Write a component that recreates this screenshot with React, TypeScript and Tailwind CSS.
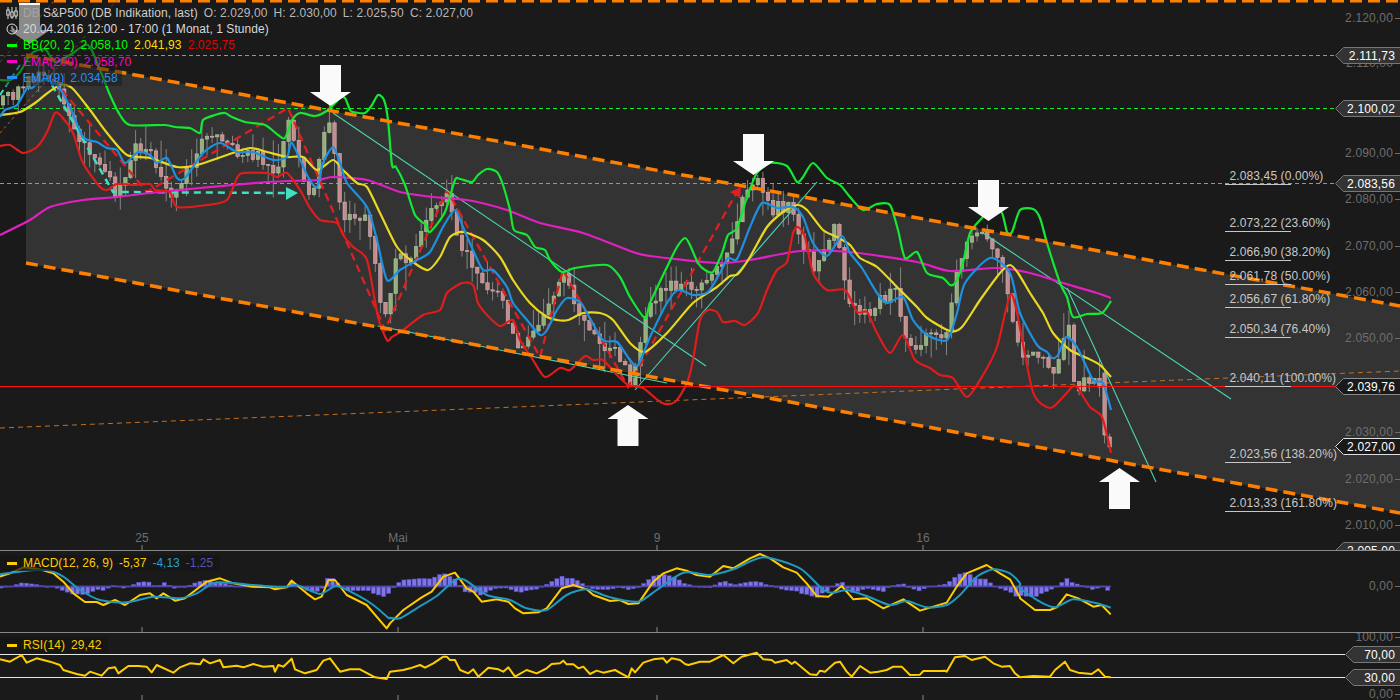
import React from "react";

type P = [number, number];
const Z = (x0: number, y0: number, a: number[][]): P[] => a.map(([x, y]) => [x0 + x / 3, y0 + y / 3]);

const green: P[] = [[0,80],[10,80],[20,72],[30,55],[38,50],[46,50],[55,62],[70,55],[88,45],[100,70],[110,95],[120,115],[130,125],[165,125],[175,127],[190,128],[200,133],[203,120],[215,115],[225,113],[232,117],[245,122],[265,125],[278,135],[285,138],[292,120],[300,113],[315,116],[328,110],[340,98],[345,98],[350,110],[353,112],[365,113],[372,105],[378,95],[384,100],[388,120],[392,165],[396,167],[405,185],[415,215],[426,225],[430,232],[445,212],[455,180],[460,179],[472,182],[478,175],[487,169],[497,172],[503,185],[510,210],[514,230],[527,235],[535,247],[545,250],[550,260],[562,272],[575,268],[607,265],[620,277],[630,297],[645,318],[650,303],[667,267],[677,247],[685,238],[690,245],[698,263],[705,270],[713,272],[722,253],[728,235],[737,228],[747,197],[757,173],[770,163],[787,166],[797,182],[803,177],[813,163],[827,178],[840,185],[850,197],[863,210],[877,204],[890,205],[898,230],[905,258],[917,252],[927,273],[943,278],[950,285],[955,283],[962,267],[970,233],[982,218],[993,207],[1002,213],[1007,232],[1012,232],[1020,210],[1033,209],[1040,218],[1047,243],[1060,283],[1067,297],[1073,317],[1087,314],[1102,313],[1111,301]];
const yellow: P[] = [[0,115],[20,112],[35,103],[45,95],[60,85],[72,88],[90,110],[107,133],[127,155],[150,158],[177,167],[197,165],[227,155],[250,148],[267,152],[287,157],[303,157],[317,170],[333,160],[343,170],[357,183],[367,187],[380,213],[397,247],[413,262],[428,270],[440,257],[450,237],[463,232],[483,240],[500,257],[513,280],[530,303],[547,317],[557,320],[568,320],[583,313],[600,313],[613,320],[630,343],[645,352],[667,333],[693,303],[717,287],[730,276],[738,274],[750,257],[767,227],[783,212],[797,205],[807,210],[823,230],[837,237],[850,245],[860,258],[877,267],[897,287],[917,307],[927,318],[950,331],[962,327],[980,300],[1000,273],[1010,265],[1018,273],[1030,293],[1043,313],[1053,333],[1070,350],[1087,358],[1100,365],[1111,377]];
const blue: P[] = [[0,117],[5,110],[17,105],[27,88],[32,88],[43,80],[57,85],[70,107],[83,137],[97,142],[107,148],[117,150],[125,163],[138,152],[150,155],[157,163],[167,158],[177,178],[185,178],[203,153],[220,143],[237,152],[253,152],[273,160],[287,157],[292,143],[308,177],[317,187],[323,163],[333,147],[340,163],[347,183],[367,207],[377,240],[387,280],[400,270],[417,260],[430,252],[443,227],[455,210],[463,227],[473,250],[483,270],[493,270],[507,287],[513,303],[527,320],[540,335],[547,330],[557,310],[567,298],[580,302],[587,313],[603,340],[617,342],[630,360],[638,365],[650,337],[667,303],[678,290],[693,295],[708,292],[720,273],[728,258],[737,259],[750,227],[762,203],[777,208],[793,207],[803,217],[813,243],[827,256],[842,236],[850,253],[862,268],[877,293],[887,303],[903,297],[913,320],[927,335],[947,340],[957,313],[965,283],[990,258],[1010,273],[1020,313],[1037,345],[1047,352],[1052,358],[1058,355],[1066,337],[1077,347],[1093,380],[1103,383],[1111,410]];
const red: P[] = [[0,146],[10,145],[23,153],[37,147],[47,132],[55,113],[62,117],[73,133],[83,163],[100,187],[107,190],[117,184],[133,185],[150,184],[155,190],[170,192],[177,207],[207,205],[227,200],[237,178],[243,173],[267,173],[277,177],[287,173],[300,190],[310,208],[320,220],[337,223],[343,235],[353,247],[367,260],[378,317],[387,340],[392,337],[403,330],[423,315],[440,310],[447,293],[462,283],[473,285],[478,303],[487,315],[500,326],[513,320],[520,340],[533,360],[545,377],[560,368],[570,370],[585,356],[593,360],[603,360],[617,375],[628,385],[643,388],[662,403],[675,402],[687,383],[693,360],[700,320],[708,310],[717,312],[723,322],[735,321],[745,325],[758,313],[767,290],[777,270],[787,262],[793,233],[798,227],[805,237],[813,273],[827,290],[845,290],[857,312],[867,312],[877,333],[890,353],[903,335],[915,360],[930,368],[940,375],[953,378],[967,397],[983,375],[997,347],[1010,295],[1017,313],[1033,392],[1050,408],[1063,397],[1072,387],[1077,387],[1090,407],[1102,417],[1111,453]];
const magenta: P[] = [[0,235],[30,220],[50,207],[83,200],[117,197],[150,193],[200,188],[267,182],[317,180],[333,177],[367,180],[400,192],[433,197],[467,200],[507,210],[540,223],[583,233],[633,252],[650,256],[717,263],[750,260],[800,251],[850,252],[917,262],[950,271],[997,268],[1030,273],[1063,283],[1097,293],[1111,298]];
const price: P[] = [[0,105],[20,90],[40,70],[60,85],[70,120],[85,150],[100,165],[115,190],[125,185],[135,145],[150,150],[160,175],[175,200],[190,165],[205,130],[220,140],[235,150],[255,155],[275,175],[290,115],[300,170],[310,205],[322,145],[330,118],[338,190],[345,215],[365,215],[385,320],[395,265],[415,250],[430,215],[445,195],[460,240],[480,280],[500,290],[515,345],[535,335],[548,300],[563,275],[580,310],[600,350],[620,355],[630,385],[645,320],[660,285],[680,285],[700,290],[725,265],[745,195],[758,185],[770,210],[790,205],[805,250],[815,270],[835,225],[850,310],[870,310],[895,290],[910,350],[925,335],[945,345],[955,280],[968,235],[985,240],[1000,265],[1015,330],[1020,355],[1040,355],[1053,380],[1068,320],[1075,385],[1095,380],[1105,385],[1110,446]];

const macd: P[] = [
  ...Z(0,530,[[0,140],[30,130],[70,112],[120,118],[160,130],[190,155],[220,190],[255,216],[290,216],[310,225],[345,210],[375,225],[420,195],[450,190],[470,205],[490,190],[525,212],[555,205],[600,170],[620,155],[660,145],[700,160],[760,170],[810,172],[825,178],[860,172],[875,152],[920,190],[945,208],[965,200],[985,150],[1005,150],[1040,195],[1100,225],[1160,295]]),
  ...Z(390,540,[[0,250],[40,210],[95,172],[125,155],[160,110],[195,98],[230,145],[250,155],[275,185],[320,178],[355,185],[375,205],[400,220],[445,217],[470,205],[515,145],[550,135],[590,148],[610,165],[660,183],[690,180],[715,192],[745,190],[790,125],[820,100],[860,85],[890,92],[920,105]]),
  ...Z(700,540,[[30,110],[70,78],[100,85],[150,55],[180,42],[210,55],[250,82],[290,98],[320,130],[350,168],[385,170],[425,138],[460,178],[500,175],[550,205],[610,178],[660,212],[740,188],[770,140],[800,100],[860,75],[900,100],[930,118],[960,172]]),
  ...Z(1000,530,[[60,205],[105,240],[150,240],[170,232],[200,193],[235,205],[280,230],[305,225],[332,253]]),
];
const signal: P[] = [
  ...Z(0,530,[[0,133],[80,122],[140,120],[190,140],[240,180],[300,210],[380,217],[460,200],[540,205],[590,190],[650,157],[760,165],[850,172],[890,165],[960,192],[1010,168],[1080,200],[1120,225],[1165,263]]),
  ...Z(390,540,[[0,233],[30,235],[80,205],[140,168],[195,120],[225,120],[290,165],[360,180],[410,205],[470,210],[530,165],[590,148],[660,172],[745,185],[800,150],[880,98]]),
  ...Z(700,540,[[30,105],[100,88],[190,52],[300,85],[370,150],[400,158],[440,150],[500,168],[570,195],[620,183],[680,202],[740,195],[780,165],[830,110],[880,88],[930,100],[960,130]]),
  ...Z(1000,530,[[60,175],[120,215],[165,232],[220,208],[290,220],[332,233]]),
];
const rsi: P[] = [
  ...Z(0,530,[[0,388],[30,395],[65,375],[80,398],[110,385],[150,395],[180,405],[190,420],[230,432],[255,437],[270,425],[305,437],[325,415],[345,412],[355,430],[385,408],[415,408],[440,410],[455,427],[470,405],[520,428],[540,412],[570,400],[600,403],[610,388],[630,400],[660,390],[670,412],[710,407],[730,412],[760,402],[790,410],[820,408],[825,425],[835,405],[850,410],[875,386],[885,418],[915,430],[950,420],[970,392],[990,385],[1020,425],[1050,418],[1080,418],[1125,442],[1160,447]]),
  ...Z(390,540,[[0,395],[40,390],[60,385],[90,375],[105,383],[130,370],[160,350],[170,350],[180,360],[195,360],[210,390],[235,400],[250,388],[265,410],[295,383],[325,388],[340,395],[355,382],[375,410],[410,390],[440,400],[470,385],[485,372],[510,370],[520,362],[530,373],[550,373],[565,385],[580,380],[600,402],[620,392],[640,398],[675,390],[715,412],[725,385],[735,397],[760,368],[790,358],[820,355],[830,368],[845,355],[870,360],[885,372],[895,375],[930,365]]),
  ...Z(700,540,[[30,365],[70,345],[100,370],[125,350],[170,338],[190,358],[215,360],[225,368],[260,360],[275,372],[285,365],[330,403],[350,405],[360,392],[375,395],[405,368],[420,365],[440,395],[455,410],[480,378],[510,398],[535,395],[560,390],[580,380],[605,380],[630,405],[660,404],[670,393],[720,393],[735,392],[740,395],[765,352],[795,348],[815,360],[855,350],[880,370],[905,380],[930,378],[945,400],[960,412]]),
  ...Z(1000,530,[[60,442],[100,438],[150,440],[165,420],[195,395],[210,420],[235,428],[275,432],[295,418],[315,440],[332,442]]),
];

const pts = (a: P[]) => a.map((p) => p.join(",")).join(" ");
const smooth = (a: P[]) => {
  let d = `M${a[0][0]},${a[0][1]}`;
  for (let i = 0; i < a.length - 1; i++) {
    const p0 = a[Math.max(i - 1, 0)], p1 = a[i], p2 = a[i + 1], p3 = a[Math.min(i + 2, a.length - 1)];
    const c1 = [p1[0] + (p2[0] - p0[0]) / 8, p1[1] + (p2[1] - p0[1]) / 8];
    const c2 = [p2[0] - (p3[0] - p1[0]) / 8, p2[1] - (p3[1] - p1[1]) / 8];
    d += ` C${c1[0].toFixed(1)},${c1[1].toFixed(1)} ${c2[0].toFixed(1)},${c2[1].toFixed(1)} ${p2[0].toFixed(1)},${p2[1].toFixed(1)}`;
  }
  return d;
};
const at = (a: P[], x: number) => {
  if (x <= a[0][0]) return a[0][1];
  for (let i = 0; i < a.length - 1; i++) {
    if (x <= a[i + 1][0]) return a[i][1] + ((a[i + 1][1] - a[i][1]) * (x - a[i][0])) / (a[i + 1][0] - a[i][0] || 1);
  }
  return a[a.length - 1][1];
};

let seed = 23;
const rnd = () => {
  seed = (seed * 16807) % 2147483647;
  return seed / 2147483647;
};
const candles: { x: number; o: number; c: number; h: number; l: number }[] = [];
{
  let prev = at(price, 0);
  for (let x = 3; x < 1112; x += 5.1) {
    let c = at(price, x) + (rnd() - 0.5) * 14;
    let o = prev;
    if (x > 1107) { o = 437; c = 447; }
    else if (x > 1102) { o = 373; c = 435; }
    candles.push({ x, o, c, h: Math.min(o, c) - rnd() * rnd() * 30, l: Math.max(o, c) + rnd() * rnd() * 30 });
    prev = c;
  }
}
const bars: { x: number; v: number }[] = [];
for (let x = 1; x < 1112; x += 5.1) bars.push({ x, v: (at(signal, x) - at(macd, x)) * 0.95 });

const CHANNEL_TOP = { x1: 26, y1: 55, x2: 1400, y2: 306 };
const CHANNEL_LOW = { x1: 26, y1: 263, x2: 1400, y2: 513 };

const DownArrow = ({ cx, top }: { cx: number; top: number }) => (
  <polygon fill="#fafafa" points={`${cx - 10.5},${top} ${cx + 10.5},${top} ${cx + 10.5},${top + 27} ${cx + 20.5},${top + 27} ${cx},${top + 41} ${cx - 20.5},${top + 27} ${cx - 10.5},${top + 27}`} />
);
const UpArrow = ({ cx, top }: { cx: number; top: number }) => (
  <polygon fill="#fafafa" points={`${cx},${top} ${cx + 20.5},${top + 14} ${cx + 10.5},${top + 14} ${cx + 10.5},${top + 41} ${cx - 10.5},${top + 41} ${cx - 10.5},${top + 14} ${cx - 20.5},${top + 14}`} />
);

const Tag = ({ text, top, left = 1335, fill = "#333333", stroke = "#777777" }: { text: string; top: number; left?: number; fill?: string; stroke?: string }) => (
  <div className="absolute h-[17px] flex items-center justify-end pr-[5px] text-[12px] tracking-[0.15px] text-white" style={{ top, left, width: 1400 - left }}>
    <svg className="absolute inset-0" width={1400 - left} height={17}>
      <polygon points={`0.5,8.5 8.5,0.5 ${1400 - left + 2},0.5 ${1400 - left + 2},16.5 8.5,16.5`} fill={fill} stroke={stroke} />
    </svg>
    <span className="relative">{text}</span>
  </div>
);

const AxisLabel = ({ text, y }: { text: string; y: number }) => (
  <div className="absolute right-0 flex items-center h-[14px] text-[12px] tracking-[0.15px] text-[#6e6e6e]" style={{ top: y - 7 }}>
    <span>{text}</span>
    <span className="ml-[2px] w-[5px] h-px bg-[#6e6e6e]" />
  </div>
);

const Fib = ({ text, y }: { text: string; y: number }) => (
  <div className="absolute left-[1225px] flex flex-col" style={{ top: y - 15 }}>
    <span className="pl-[4.5px] h-[15px] leading-[15px] text-[12px] tracking-[0.12px] text-[#c8c8c8] whitespace-nowrap">{text}</span>
    <span className="w-[66px] h-px bg-[#c8c8c8]" />
  </div>
);

const XLabel = ({ text, x }: { text: string; x: number }) => (
  <div className="absolute top-[531px] -translate-x-1/2 text-[12px] leading-[14px] text-[#6e6e6e]" style={{ left: x }}>{text}</div>
);

const Row = ({ children, icon, width }: { children: React.ReactNode; icon: React.ReactNode; width: number }) => (
  <div className="flex items-center h-[16.2px] bg-[#1a1a1a]/50 text-[12px] tracking-[0.1px] whitespace-nowrap" style={{ width }}>
    <div className="w-[23px] flex justify-center">{icon}</div>
    <div className="flex gap-[6px]">{children}</div>
  </div>
);
const Dash = ({ c }: { c: string }) => <span className="block w-[10px] h-[3px]" style={{ background: c }} />;

export default function App() {
  const dashed = { strokeDasharray: "12 6", stroke: "#ff8000", strokeWidth: 3.5 };
  return (
    <div className="w-[1400px] h-[700px] flex flex-col bg-[#1a1a1a] overflow-hidden" style={{ fontFamily: '"Liberation Sans", Arial, sans-serif' }}>
      {/* main price pane */}
      <div className="relative h-[551px] shrink-0 overflow-hidden border-b border-[#888888]">
        <svg className="absolute inset-0" width={1400} height={550}>
          <polygon fill="#333333" points="26,55 1400,306 1400,513 26,263" />
          <line x1={0} y1={1} x2={1400} y2={1} stroke="#ff8000" strokeWidth={3} strokeDasharray="12 6" />
          <line x1={0} y1={133} x2={117} y2={0} stroke="#a86a20" strokeDasharray="3 3" />
          <line x1={0} y1={62} x2={55} y2={0} stroke="#a86a20" strokeDasharray="3 3" />
          <line x1={0} y1={428} x2={1400} y2={371} stroke="#c47020" strokeDasharray="5 4" />
          {[55.5, 108.5, 183.5].map((y) => (
            <line key={y} x1={0} y1={y} x2={1335} y2={y} stroke="#11ee22" strokeDasharray="4 3" />
          ))}
          {candles.map((k, i) => {
            const up = k.c < k.o;
            return (
              <g key={i}>
                <line x1={k.x} x2={k.x} y1={k.h} y2={k.l} stroke="#858585" />
                <rect x={k.x - 1.7} y={Math.min(k.o, k.c)} width={3.4} height={Math.max(Math.abs(k.o - k.c), 1)} fill={up ? "#93b07a" : "#c48c8c"} stroke={up ? "#b5c6a4" : "#d6b4b4"} strokeWidth={0.6} />
              </g>
            );
          })}
          <polyline fill="none" stroke="#e02020" strokeWidth={2.3} strokeDasharray="8 5" points="62,90 147,192 288,108 385,330 447,190 540,357 563,270 628,387 737,192" />
          <polygon fill="#e02020" points="741,187 730,192 740,198" />
          <polyline fill="none" stroke="#40e0c0" strokeWidth={2} strokeDasharray="6 4" points="0,95 20,65" />
          <polyline fill="none" stroke="#40e0c0" strokeWidth={2.5} strokeDasharray="7 5" points="52,85 113,192 287,193" />
          <polygon fill="#40e0c0" points="286,187 298,193 286,200" />
          {[[333,113,706,366],[378,326,667,383],[635,390,817,182],[983,233,1231,399],[1067,288,1156,482]].map((l, i) => (
            <line key={i} x1={l[0]} y1={l[1]} x2={l[2]} y2={l[3]} stroke="#4ad6b4" strokeWidth={1.1} />
          ))}
          <path d={smooth(magenta)} fill="none" stroke="#e020c0" strokeWidth={2.2} />
          <path d={smooth(red)} fill="none" stroke="#e01c1c" strokeWidth={2.2} />
          <path d={smooth(green)} fill="none" stroke="#14e832" strokeWidth={2.2} />
          <path d={smooth(yellow)} fill="none" stroke="#e8d820" strokeWidth={2.2} />
          <path d={smooth(blue)} fill="none" stroke="#1e90e0" strokeWidth={2.2} />
          <line {...CHANNEL_TOP} {...dashed} />
          <line {...CHANNEL_LOW} {...dashed} />
          <line x1={0} y1={386.5} x2={1335} y2={386.5} stroke="#ff1010" />
          <DownArrow cx={29.5} top={3} />
          <DownArrow cx={330.5} top={65} />
          <DownArrow cx={753.5} top={134} />
          <DownArrow cx={988.5} top={180} />
          <UpArrow cx={628} top={405} />
          <UpArrow cx={1119.5} top={468} />
          {[142, 398, 657, 923].map((x) => (
            <line key={x} x1={x} x2={x} y1={545} y2={550} stroke="#888888" />
          ))}
        </svg>

        {[["2.120,00",18],["2.110,00",63],["2.090,00",153],["2.080,00",199],["2.070,00",246],["2.060,00",292],["2.050,00",338],["2.030,00",432],["2.020,00",479],["2.010,00",525]].map(([t, y]) => (
          <AxisLabel key={t as string} text={t as string} y={y as number} />
        ))}
        <XLabel text="25" x={142} />
        <XLabel text="Mai" x={398} />
        <XLabel text="9" x={657} />
        <XLabel text="16" x={923} />

        {[["2.083,45 (0.00%)",184],["2.073,22 (23.60%)",231],["2.066,90 (38.20%)",260],["2.061,78 (50.00%)",284],["2.056,67 (61.80%)",307],["2.050,34 (76.40%)",337],["2.040,11 (100.00%)",386],["2.023,56 (138.20%)",462],["2.013,33 (161.80%)",511]].map(([t, y]) => (
          <Fib key={t as string} text={t as string} y={y as number} />
        ))}

        <Tag text="2.111,73" top={47} />
        <Tag text="2.100,02" top={100} />
        <Tag text="2.083,56" top={175} />
        <Tag text="2.039,76" top={378} fill="#1a1a1a" stroke="#888888" />
        <Tag text="2.027,00" top={438} fill="#1a1a1a" stroke="#e0e0e0" />
        <Tag text="2.005,00" top={542} />

        <div className="absolute left-0 top-[5px] flex flex-col">
          <Row width={476} icon={
            <svg width={12} height={14} viewBox="0 0 12 14" fill="none" stroke="#e0e0e0">
              <path d="M2 1v12M6 1v12M10 1v12" />
              <rect x={0.8} y={4} width={2.4} height={5} fill="#1a1a1a" />
              <rect x={4.8} y={6} width={2.4} height={5} fill="#1a1a1a" />
              <rect x={8.8} y={5} width={2.4} height={5} fill="#1a1a1a" />
            </svg>
          }>
            <span className="text-[#d0d0d0]/40 -mr-[3px]">DB</span>
            <span className="text-[#cfcfcf]">S&amp;P500 (DB Indikation, last)</span>
            <span className="text-[#b8b8b8]">O: 2.029,00</span>
            <span className="text-[#b8b8b8]">H: 2.030,00</span>
            <span className="text-[#b8b8b8]">L: 2.025,50</span>
            <span className="text-[#b8b8b8]">C: 2.027,00</span>
          </Row>
          <Row width={272} icon={
            <svg width={12} height={12} viewBox="0 0 12 12" fill="none" stroke="#e0e0e0">
              <circle cx={6} cy={6} r={5} />
              <path d="M6 3v3.2h2.5" />
            </svg>
          }>
            <span className="text-[#d8d8d8] tracking-[0.05px]">20.04.2016 12:00 - 17:00 (1 Monat, 1 Stunde)</span>
          </Row>
          <Row width={242} icon={<Dash c="#00ff00" />}>
            <span className="text-[#00ff00]">BB(20, 2)</span>
            <span className="text-[#00ff00]">2.058,10</span>
            <span className="text-[#ffdd00]">2.041,93</span>
            <span className="text-[#e00000]">2.025,75</span>
          </Row>
          <Row width={135} icon={<Dash c="#ff00cc" />}>
            <span className="text-[#ff00cc]">EMA(200)</span>
            <span className="text-[#ff00cc]">2.058,70</span>
          </Row>
          <Row width={122} icon={<Dash c="#1e90ff" />}>
            <span className="text-[#1e90ff]">EMA(9)</span>
            <span className="text-[#1e90ff]">2.034,58</span>
          </Row>
        </div>
      </div>

      {/* MACD pane */}
      <div className="relative h-[82px] shrink-0 overflow-hidden border-b border-[#888888]">
        <svg className="absolute inset-0" width={1400} height={82} viewBox="0 551 1400 82">
          {bars.map((b, i) => (
            <rect key={i} x={b.x - 2} y={586 - Math.max(b.v, 0)} width={4.1} height={Math.max(Math.abs(b.v), 1)} fill="#7f75ea" stroke="#5a4fc0" strokeWidth={0.5} />
          ))}
          <line x1={0} x2={1111} y1={586.5} y2={586.5} stroke="#5048a8" strokeWidth={1.5} />
          <polyline points={pts(macd)} fill="none" stroke="#ffcc00" strokeWidth={2} strokeLinejoin="round" />
          <path d={smooth(signal)} fill="none" stroke="#2098c0" strokeWidth={2} />
          {[142, 398, 657, 923].map((x) => (
            <line key={x} x1={x} x2={x} y1={627} y2={632} stroke="#888888" />
          ))}
        </svg>
        <div className="absolute left-0 top-[4px] flex items-center h-[16px] w-[220px] gap-[6px] text-[12px] whitespace-nowrap pl-[7px] bg-[#161616]/70">
          <span className="w-[10px] h-[3px] bg-[#ffcc00]" />
          <span className="text-[#ffcc00]">MACD(12, 26, 9)</span>
          <span className="text-[#ffcc00]">-5,37</span>
          <span className="text-[#2a9fc9]">-4,13</span>
          <span className="text-[#5a50b8]">-1,25</span>
        </div>
        <AxisLabel text="0,00" y={35} />
      </div>

      {/* RSI pane */}
      <div className="relative flex-1 overflow-hidden">
        <svg className="absolute inset-0" width={1400} height={67} viewBox="0 633 1400 67">
          <line x1={0} x2={1345} y1={654.5} y2={654.5} stroke="#e4e4e4" />
          <line x1={0} x2={1345} y1={677.5} y2={677.5} stroke="#e4e4e4" />
          <polyline points={pts(rsi)} fill="none" stroke="#ffcc00" strokeWidth={2} strokeLinejoin="round" />
          {[142, 398, 657, 923].map((x) => (
            <line key={x} x1={x} x2={x} y1={695} y2={700} stroke="#888888" />
          ))}
        </svg>
        <div className="absolute left-0 top-[4px] flex items-center h-[16px] w-[108px] gap-[6px] text-[12px] tracking-[0.1px] whitespace-nowrap pl-[7px] bg-[#161616]/70">
          <span className="w-[10px] h-[3px] bg-[#ffcc00]" />
          <span className="text-[#ffcc00]">RSI(14)</span>
          <span className="text-[#ffcc00]">29,42</span>
        </div>
        <AxisLabel text="100,00" y={4} />
        <AxisLabel text="0,00" y={61} />
        <Tag text="70,00" top={13} left={1345} />
        <Tag text="30,00" top={36} left={1345} />
      </div>
    </div>
  );
}
